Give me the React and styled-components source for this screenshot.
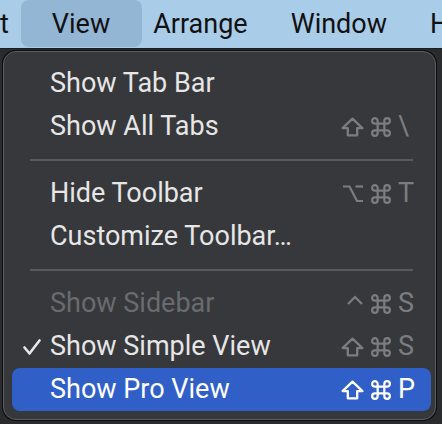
import React from "react";
import styled, { createGlobalStyle } from "styled-components";

const GlobalStyle = createGlobalStyle`
  html, body {
    margin: 0;
    padding: 0;
    background: #2a2b2d;
    font-family: Roboto, "Liberation Sans", sans-serif;
    -webkit-font-smoothing: antialiased;
  }
`;

const StPage = styled.div`
  width: 442px;
  height: 424px;
  overflow: hidden;
  background: #2a2b2d;
`;

const StMenuBar = styled.nav`
  height: 48px;
  display: flex;
  align-items: stretch;
  gap: 43px;
  padding-left: 0;
  background: #a9cce9;
  border-bottom: 1px solid #1c1d1f;
  white-space: nowrap;
  overflow: hidden;
`;

const StBarItem = styled.div`
  display: flex;
  align-items: center;
  height: 47px;
  font-size: 27px;
  color: #111;
  padding: ${({ $active }) => ($active ? "0 32px 0 31px" : "0")};
  margin: ${({ $active }) => ($active ? "0 -32px 0 -31px" : "0")};
  background: ${({ $active }) => ($active ? "#93b6d4" : "transparent")};
  border-radius: 8px;
`;

const StMenu = styled.section`
  margin: 2px 6px 0 3px;
  padding: 10px 4px 8px 8px;
  background: #36383b;
  border: 1px solid #5c5e61;
  border-radius: 13px;
  box-shadow: 0 0 0 1px #0d0d0e;
`;

const StRow = styled.div`
  height: 43px;
  display: grid;
  grid-template-columns: 38px 1fr auto 33px;
  align-items: center;
  font-size: 27px;
  line-height: 43px;
  border-radius: 8px;
  background: ${({ $selected }) => ($selected ? "#3060c7" : "transparent")};
  color: ${({ $selected, $disabled }) =>
    $selected ? "#ffffff" : $disabled ? "#696b6e" : "#e6e6e6"};
`;

const StCheck = styled.span`
  display: flex;
  align-items: center;
  padding-left: 11px;
`;

const StLabel = styled.span`
  white-space: nowrap;
`;

const StMods = styled.span`
  display: flex;
  align-items: center;
  justify-content: flex-end;
  gap: 7px;
  padding-right: 7px;
  color: ${({ $selected }) => ($selected ? "#ffffff" : "#7b7d80")};
`;

const StKey = styled.span`
  color: ${({ $selected }) => ($selected ? "#ffffff" : "#7b7d80")};
`;

const StSeparator = styled.div`
  height: 24px;
  display: flex;
  align-items: center;
  padding: 0 18px 0 18px;

  &::after {
    content: "";
    flex: 1;
    height: 2px;
    background: #57595c;
  }
`;

const Shift = () => (
  <svg width="23" height="20" viewBox="0 0 22 19" fill="none" stroke="currentColor" strokeWidth="2.2" strokeLinejoin="round">
    <path d="M11 1.5 L20.5 10.5 H15.5 V17.5 H6.5 V10.5 H1.5 Z" />
  </svg>
);

const Command = () => (
  <svg width="20" height="20" viewBox="1 1 18 18" fill="none" stroke="currentColor" strokeWidth="2">
    <path d="M7 7 V4.5 A2.5 2.5 0 1 0 4.5 7 H15.5 A2.5 2.5 0 1 0 13 4.5 V15.5 A2.5 2.5 0 1 0 15.5 13 H4.5 A2.5 2.5 0 1 0 7 15.5 Z" />
  </svg>
);

const Option = () => (
  <svg width="22" height="19" viewBox="0 0 22 19" fill="none" stroke="currentColor" strokeWidth="2.2">
    <path d="M1 2.5 H7.5 L15 17 H21" />
    <path d="M13.5 2.5 H21" />
  </svg>
);

const Control = () => (
  <svg width="18" height="19" viewBox="0 0 18 19" fill="none" stroke="currentColor" strokeWidth="2.2">
    <path d="M2 10 L9 3 L16 10" />
  </svg>
);

const Check = () => (
  <svg width="18" height="16" viewBox="0 0 18 16" fill="none" stroke="#e6e6e6" strokeWidth="2.6" strokeLinecap="round" strokeLinejoin="round">
    <path d="M1.5 8.5 L6.5 14.5 L16.5 1.5" />
  </svg>
);

const icons = { shift: Shift, cmd: Command, opt: Option, ctrl: Control };

const items = [
  { label: "Show Tab Bar" },
  { label: "Show All Tabs", mods: ["shift", "cmd"], key: "\\" },
  { separator: true },
  { label: "Hide Toolbar", mods: ["opt", "cmd"], key: "T" },
  { label: "Customize Toolbar…" },
  { separator: true },
  { label: "Show Sidebar", mods: ["ctrl", "cmd"], key: "S", disabled: true },
  { label: "Show Simple View", mods: ["shift", "cmd"], key: "S", checked: true },
  { label: "Show Pro View", mods: ["shift", "cmd"], key: "P", selected: true },
];

const App = () => {
  return (
    <StPage>
      <GlobalStyle />
      <StMenuBar>
        <StBarItem>t</StBarItem>
        <StBarItem $active>View</StBarItem>
        <StBarItem>Arrange</StBarItem>
        <StBarItem>Window</StBarItem>
        <StBarItem>Help</StBarItem>
      </StMenuBar>
      <StMenu>
        {items.map((item, index) =>
          item.separator ? (
            <StSeparator key={index} />
          ) : (
            <StRow key={index} $selected={item.selected} $disabled={item.disabled}>
              <StCheck>{item.checked && <Check />}</StCheck>
              <StLabel>{item.label}</StLabel>
              <StMods $selected={item.selected}>
                {(item.mods || []).map((m) => {
                  const Icon = icons[m];
                  return <Icon key={m} />;
                })}
              </StMods>
              <StKey $selected={item.selected}>{item.key}</StKey>
            </StRow>
          )
        )}
      </StMenu>
    </StPage>
  );
};

export default App;
